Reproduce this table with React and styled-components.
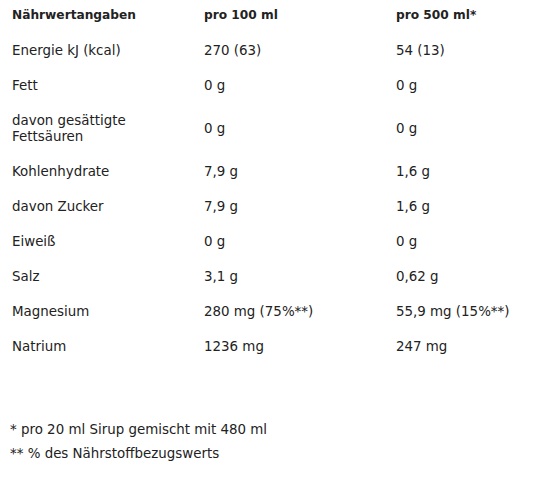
import React from 'react';
import styled, { createGlobalStyle } from 'styled-components';

const GlobalStyle = createGlobalStyle`
  body {
    margin: 0;
    background: #ffffff;
    font-family: "DejaVu Sans", "Liberation Sans", sans-serif;
    color: #222222;
  }
`;

const Wrapper = styled.div`
  width: 544px;
  padding: 0 0 0 12px;
  box-sizing: border-box;
`;

const Row = styled.div`
  display: grid;
  grid-template-columns: 192px 192px 1fr;
  align-items: center;
  padding: ${(p) => (p.$head ? '6.5px 0 10.5px' : '9.5px 0')};
  font-size: ${(p) => (p.$head ? '12.2px' : '13.4px')};
  line-height: 16px;
  font-weight: ${(p) => (p.$head ? 700 : 400)};
`;

const Cell = styled.div`
  padding-right: 8px;
`;

const Notes = styled.div`
  margin-top: 54px;
  margin-left: -2px;
  font-size: 13.4px;
  line-height: 24px;
`;

const rows = [
  ['Energie kJ (kcal)', '270 (63)', '54 (13)'],
  ['Fett', '0 g', '0 g'],
  [['davon gesättigte', 'Fettsäuren'], '0 g', '0 g'],
  ['Kohlenhydrate', '7,9 g', '1,6 g'],
  ['davon Zucker', '7,9 g', '1,6 g'],
  ['Eiweiß', '0 g', '0 g'],
  ['Salz', '3,1 g', '0,62 g'],
  ['Magnesium', '280 mg (75%**)', '55,9 mg (15%**)'],
  ['Natrium', '1236 mg', '247 mg'],
];

export default function App() {
  return (
    <>
      <GlobalStyle />
      <Wrapper>
        <Row $head>
          <Cell>Nährwertangaben</Cell>
          <Cell>pro 100 ml</Cell>
          <Cell>pro 500 ml*</Cell>
        </Row>
        {rows.map(([label, a, b], i) => (
          <Row key={i}>
            <Cell>
              {Array.isArray(label)
                ? label.map((l) => <div key={l}>{l}</div>)
                : label}
            </Cell>
            <Cell>{a}</Cell>
            <Cell>{b}</Cell>
          </Row>
        ))}
        <Notes>
          <div>* pro 20 ml Sirup gemischt mit 480 ml</div>
          <div>** % des Nährstoffbezugswerts</div>
        </Notes>
      </Wrapper>
    </>
  );
}
